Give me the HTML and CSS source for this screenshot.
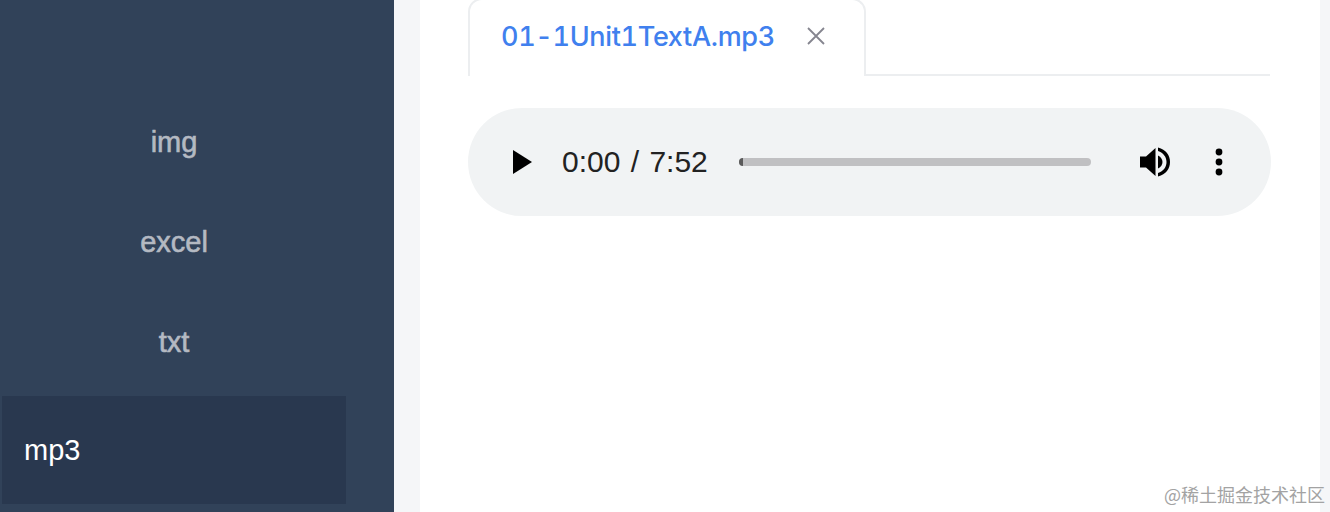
FILE: index.html
```html
<!DOCTYPE html>
<html lang="en">
<head>
    <meta charset="UTF-8">
    <title>Document</title>
    <link rel="stylesheet" href="styles.css">
</head>
<body>
    <div class="page">
        <div class="sidebar">
            <ul class="menu">
                <li class="menu-item">img</li>
                <li class="menu-item">excel</li>
                <li class="menu-item">txt</li>
                <li class="menu-item active">mp3</li>
            </ul>
        </div>
        <div class="main">
            <div class="card">
                <div class="tabs">
                    <div class="tab">
                        <span class="tab-name">01-1Unit1TextA.mp3</span>
                        <svg class="tab-close" width="20" height="20" viewBox="0 0 20 20">
                            <path d="M2 2L18 18M18 2L2 18" stroke="#85858f" stroke-width="1.8" fill="none"/>
                        </svg>
                    </div>
                </div>
                <div class="player">
                    <svg class="play" width="20" height="24" viewBox="0 0 20 24">
                        <path d="M1 0L20 12L1 24Z" fill="#000"/>
                    </svg>
                    <span class="time">0:00 / 7:52</span>
                    <div class="track"><div class="track-done"></div></div>
                    <svg class="volume" width="32" height="32" viewBox="0 0 32 32">
                        <path d="M1 10.500H7L16.500 2V30L7 21.500H1Z" fill="#000"/>
                        <path d="M19 9.500C22 11 23.500 13.500 23.500 16C23.500 18.500 22 21 19 22.500Z" fill="#000"/>
                        <path d="M19 1.500C27 3.500 31 9.500 31 16C31 22.500 27 28.500 19 30.500V27C24.500 25 27.500 21 27.500 16C27.500 11 24.500 7 19 5Z" fill="#000"/>
                    </svg>
                    <svg class="more" width="10" height="28" viewBox="0 0 10 28">
                        <circle cx="5" cy="4" r="3.400" fill="#000"/>
                        <circle cx="5" cy="14" r="3.400" fill="#000"/>
                        <circle cx="5" cy="24" r="3.400" fill="#000"/>
                    </svg>
                </div>
                <div class="watermark">@稀土掘金技术社区</div>
            </div>
        </div>
    </div>
</body>
</html>
```

FILE: styles.css
```css
*{
    margin: 0;
    padding: 0;
    list-style: none;
    box-sizing: border-box;
}
html,body{
    height: 100%;
    overflow: hidden;
}
body{
    font-family: "Liberation Sans", Arial, sans-serif;
}
.page{
    display: flex;
    height: 512px;
}
.sidebar{
    width: 394px;
    flex: none;
    background: #314259;
    padding: 92px 48px 0 2px;
}
.menu-item{
    height: 100px;
    display: flex;
    align-items: center;
    justify-content: center;
    font-size: 29px;
    color: #b4b9c2;
    -webkit-text-stroke: 0.6px #b4b9c2;
}
.menu-item.active{
    height: 108px;
    margin-top: 4px;
    justify-content: flex-start;
    padding-left: 22px;
    background: #29384f;
    color: #fff;
    -webkit-text-stroke: 0;
}
.main{
    flex: 1;
    background: #f5f6f8;
    padding: 0 10px 0 26px;
}
.card{
    position: relative;
    height: 100%;
    background: #fff;
    padding: 0 49px 0 48px;
}
.tabs{
    display: flex;
    height: 76px;
    margin-right: 1px;
    border-bottom: 2px solid #eceef0;
}
.tab{
    display: flex;
    align-items: center;
    gap: 31px;
    width: 398px;
    height: 78px;
    margin-top: -2px;
    padding: 0 0 4px 31px;
    background: #fff;
    border: 2px solid #eceef0;
    border-bottom: none;
    border-radius: 14px 14px 0 0;
}
.tab-name{
    font-family: Inter, "Liberation Sans", sans-serif;
    font-size: 27px;
    font-weight: 500;
    letter-spacing: -0.33px;
    font-variant-numeric: tabular-nums;
    color: #4080ee;
}
.player{
    display: flex;
    align-items: center;
    height: 108px;
    margin-top: 32px;
    padding: 0 44px;
    background: #f1f3f4;
    border-radius: 54px;
}
.time{
    margin-left: 30px;
    font-size: 30px;
    word-spacing: 2px;
    color: #222;
}
.track{
    width: 352px;
    height: 8px;
    margin-left: 31px;
    background: #c0c0c2;
    border-radius: 4px;
}
.track-done{
    width: 4px;
    height: 100%;
    background: #5a5a5a;
    border-radius: 4px 0 0 4px;
}
.volume{
    margin-left: 48px;
}
.more{
    margin-left: 43px;
}
.watermark{
    position: absolute;
    right: -5px;
    bottom: 5px;
    font-family: "Noto Sans CJK SC", sans-serif;
    font-size: 18px;
    color: #a3a3a3;
}
```
